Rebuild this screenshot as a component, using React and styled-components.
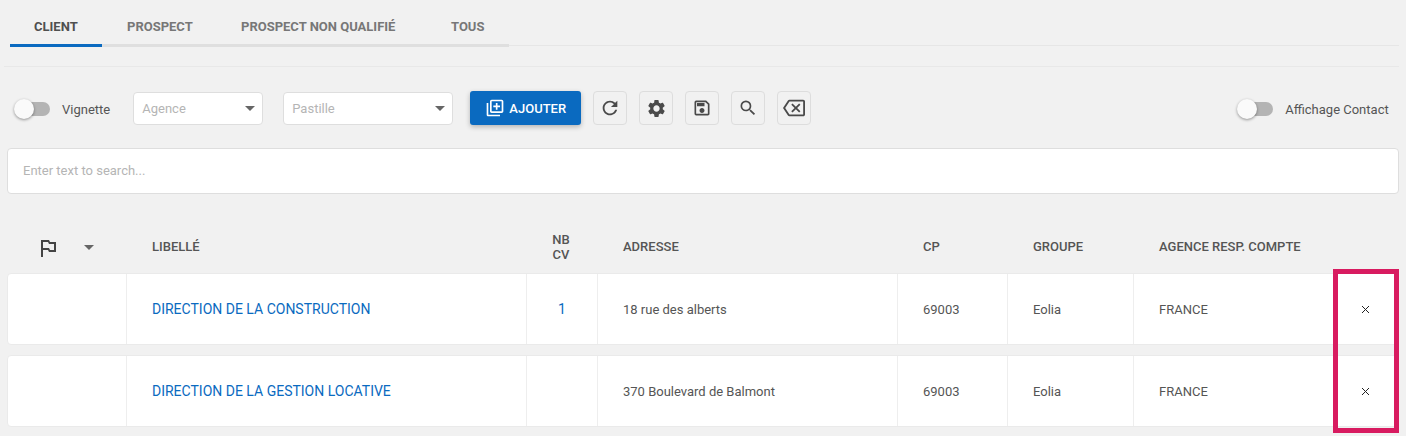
import React from 'react';
import styled, { createGlobalStyle } from 'styled-components';
import {
  MdOutlineLibraryAdd,
  MdRefresh,
  MdSettings,
  MdOutlineSave,
  MdSearch,
  MdOutlineBackspace,
  MdOutlinedFlag
} from 'react-icons/md';

const GlobalStyle = createGlobalStyle`
  html, body {
    margin: 0;
    padding: 0;
    background: #f1f1f1;
    font-family: Roboto, 'Liberation Sans', sans-serif;
    color: #555;
    overflow: hidden;
  }
  * { box-sizing: border-box; }
`;

const columns = '118px 400px 71px 300px 110px 126px 1fr 66px';

const Page = styled.div`
  position: relative;
  width: 1406px;
  height: 436px;
  padding: 0 7px;
`;

const TabBar = styled.div`
  display: flex;
  height: 46px;
  margin: 0 0 0 3px;
  border-bottom: 1px solid #e6e6e6;
`;

const Tab = styled.div`
  width: ${props => props.$width}px;
  height: 47px;
  padding: 19px 0 0 ${props => props.$pad}px;
  font-size: 13px;
  font-weight: 700;
  line-height: 16px;
  white-space: nowrap;
  color: ${props => (props.$active ? '#4f4f4f' : '#777')};
  border-bottom: 3px solid ${props => (props.$active ? '#0a6ac0' : '#dfdfdf')};
`;

const Divider = styled.div`
  height: 1px;
  margin: 20px 0 0 -3px;
  background: #e8e8e8;
`;

const Toolbar = styled.div`
  display: flex;
  align-items: center;
  height: 34px;
  margin-top: 24px;
  padding-left: 7px;
`;

const ToggleWrap = styled.div`
  display: flex;
  align-items: center;
  height: 34px;
  padding-top: 2px;
  margin-left: ${props => props.$push || 0}px;
  font-size: 13px;
  color: #555;
`;

const ToggleTrack = styled.div`
  position: relative;
  width: 28px;
  height: 14px;
  margin: 0 12px 0 8px;
  border-radius: 7px;
  background: #b4b4b4;
`;

const ToggleKnob = styled.div`
  position: absolute;
  left: -8px;
  top: -3px;
  width: 20px;
  height: 20px;
  border-radius: 50%;
  background: #fafafa;
  box-shadow: 0 1px 3px rgba(0, 0, 0, 0.4);
`;

const Select = styled.div`
  display: flex;
  align-items: center;
  justify-content: space-between;
  width: ${props => props.$width}px;
  height: 33px;
  margin-left: ${props => props.$gap}px;
  padding: 0 7px 0 8px;
  font-size: 13px;
  color: #b5b5b5;
  background: #fff;
  border: 1px solid #dedede;
  border-radius: 4px;
`;

const Caret = styled.span`
  width: 0;
  height: 0;
  border-left: 5px solid transparent;
  border-right: 5px solid transparent;
  border-top: 5px solid ${props => props.$color || '#666'};
`;

const AddButton = styled.div`
  display: flex;
  align-items: center;
  justify-content: center;
  gap: 4px;
  width: 111px;
  height: 34px;
  margin: 0 12px 0 17px;
  font-size: 13px;
  font-weight: 500;
  color: #fff;
  background: #0a6ac0;
  border-radius: 3px;
  box-shadow: 0 2px 5px rgba(0, 0, 0, 0.25);
`;

const IconButton = styled.div`
  display: flex;
  align-items: center;
  justify-content: center;
  width: 34px;
  height: 34px;
  margin-right: 12px;
  color: #4a4a4a;
  border: 1px solid #dddddd;
  border-radius: 4px;
`;

const SearchBox = styled.div`
  display: flex;
  align-items: center;
  height: 46px;
  margin-top: 23px;
  padding: 0 0 1px 15px;
  font-size: 13px;
  color: #b5b5b5;
  background: #fff;
  border: 1px solid #dedede;
  border-radius: 4px;
`;

const HeaderRow = styled.div`
  display: grid;
  grid-template-columns: ${columns};
  align-items: center;
  height: 48px;
  margin-top: 31px;
  padding-bottom: 5px;
  font-size: 13px;
  font-weight: 500;
  color: #555;
`;

const HeadCell = styled.div`
  padding-left: ${props => (props.$center ? 1 : 27)}px;
  line-height: 15px;
  text-align: ${props => (props.$center ? 'center' : 'left')};
`;

const FlagCell = styled.div`
  display: flex;
  align-items: center;
  padding: 2px 0 0 29px;
  color: #444;
  gap: 24px;
`;

const Rows = styled.div`
  display: flex;
  flex-direction: column;
  gap: 10px;
`;

const Row = styled.div`
  display: grid;
  grid-template-columns: ${columns};
  height: 72px;
  color: #555;
  background: #fff;
  border: 1px solid #eaeaea;
  border-radius: 4px;
`;

const Cell = styled.div`
  display: flex;
  align-items: center;
  justify-content: ${props => (props.$center ? 'center' : 'flex-start')};
  padding-left: ${props => (props.$center ? 0 : 25)}px;
  border-left: ${props => (props.$plain ? 'none' : '1px solid #eeeeee')};
  color: ${props => (props.$link ? '#0a6ac0' : 'inherit')};
  font-size: ${props => (props.$link ? 14 : 13)}px;
`;

const Highlight = styled.div`
  position: absolute;
  left: 1333px;
  top: 269px;
  width: 66px;
  height: 164px;
  border: 5px solid #d81b60;
`;

const CloseIcon = () => (
  <svg width="9" height="9" viewBox="0 0 9 9" fill="none" stroke="#222" strokeWidth="1">
    <path d="M1 1 L8 8 M8 1 L1 8" />
  </svg>
);

const tabs = [
  { label: 'CLIENT', width: 92, pad: 24, active: true },
  { label: 'PROSPECT', width: 115, pad: 25 },
  { label: 'PROSPECT NON QUALIFIÉ', width: 210, pad: 24 },
  { label: 'TOUS', width: 82, pad: 24 }
];

const rows = [
  { name: 'DIRECTION DE LA CONSTRUCTION', cv: '1', address: '18 rue des alberts' },
  { name: 'DIRECTION DE LA GESTION LOCATIVE', cv: '', address: '370 Boulevard de Balmont' }
];

const Toggle = ({ label, push }) => (
  <ToggleWrap $push={push}>
    <ToggleTrack>
      <ToggleKnob />
    </ToggleTrack>
    {label}
  </ToggleWrap>
);

export default function App() {
  return (
    <Page>
      <GlobalStyle />
      <TabBar>
        {tabs.map(tab => (
          <Tab key={tab.label} $width={tab.width} $pad={tab.pad} $active={tab.active}>
            {tab.label}
          </Tab>
        ))}
      </TabBar>
      <Divider />
      <Toolbar>
        <Toggle label="Vignette" />
        <Select $width={130} $gap={23}>
          Agence
          <Caret />
        </Select>
        <Select $width={170} $gap={20}>
          Pastille
          <Caret />
        </Select>
        <AddButton>
          <MdOutlineLibraryAdd size={20} />
          AJOUTER
        </AddButton>
        <IconButton><MdRefresh size={22} /></IconButton>
        <IconButton><MdSettings size={21} /></IconButton>
        <IconButton><MdOutlineSave size={20} /></IconButton>
        <IconButton><MdSearch size={20} /></IconButton>
        <IconButton><MdOutlineBackspace size={22} /></IconButton>
        <Toggle label="Affichage Contact" push={414} />
      </Toolbar>
      <SearchBox>Enter text to search...</SearchBox>
      <HeaderRow>
        <FlagCell>
          <MdOutlinedFlag size={24} />
          <Caret />
        </FlagCell>
        <HeadCell>LIBELLÉ</HeadCell>
        <HeadCell $center>NB<br />CV</HeadCell>
        <HeadCell>ADRESSE</HeadCell>
        <HeadCell>CP</HeadCell>
        <HeadCell>GROUPE</HeadCell>
        <HeadCell>AGENCE RESP. COMPTE</HeadCell>
      </HeaderRow>
      <Rows>
        {rows.map(row => (
          <Row key={row.name}>
            <div />
            <Cell $link>{row.name}</Cell>
            <Cell $link $center>{row.cv}</Cell>
            <Cell>{row.address}</Cell>
            <Cell>69003</Cell>
            <Cell>Eolia</Cell>
            <Cell>FRANCE</Cell>
            <Cell $center $plain><CloseIcon /></Cell>
          </Row>
        ))}
      </Rows>
      <Highlight />
    </Page>
  );
}
